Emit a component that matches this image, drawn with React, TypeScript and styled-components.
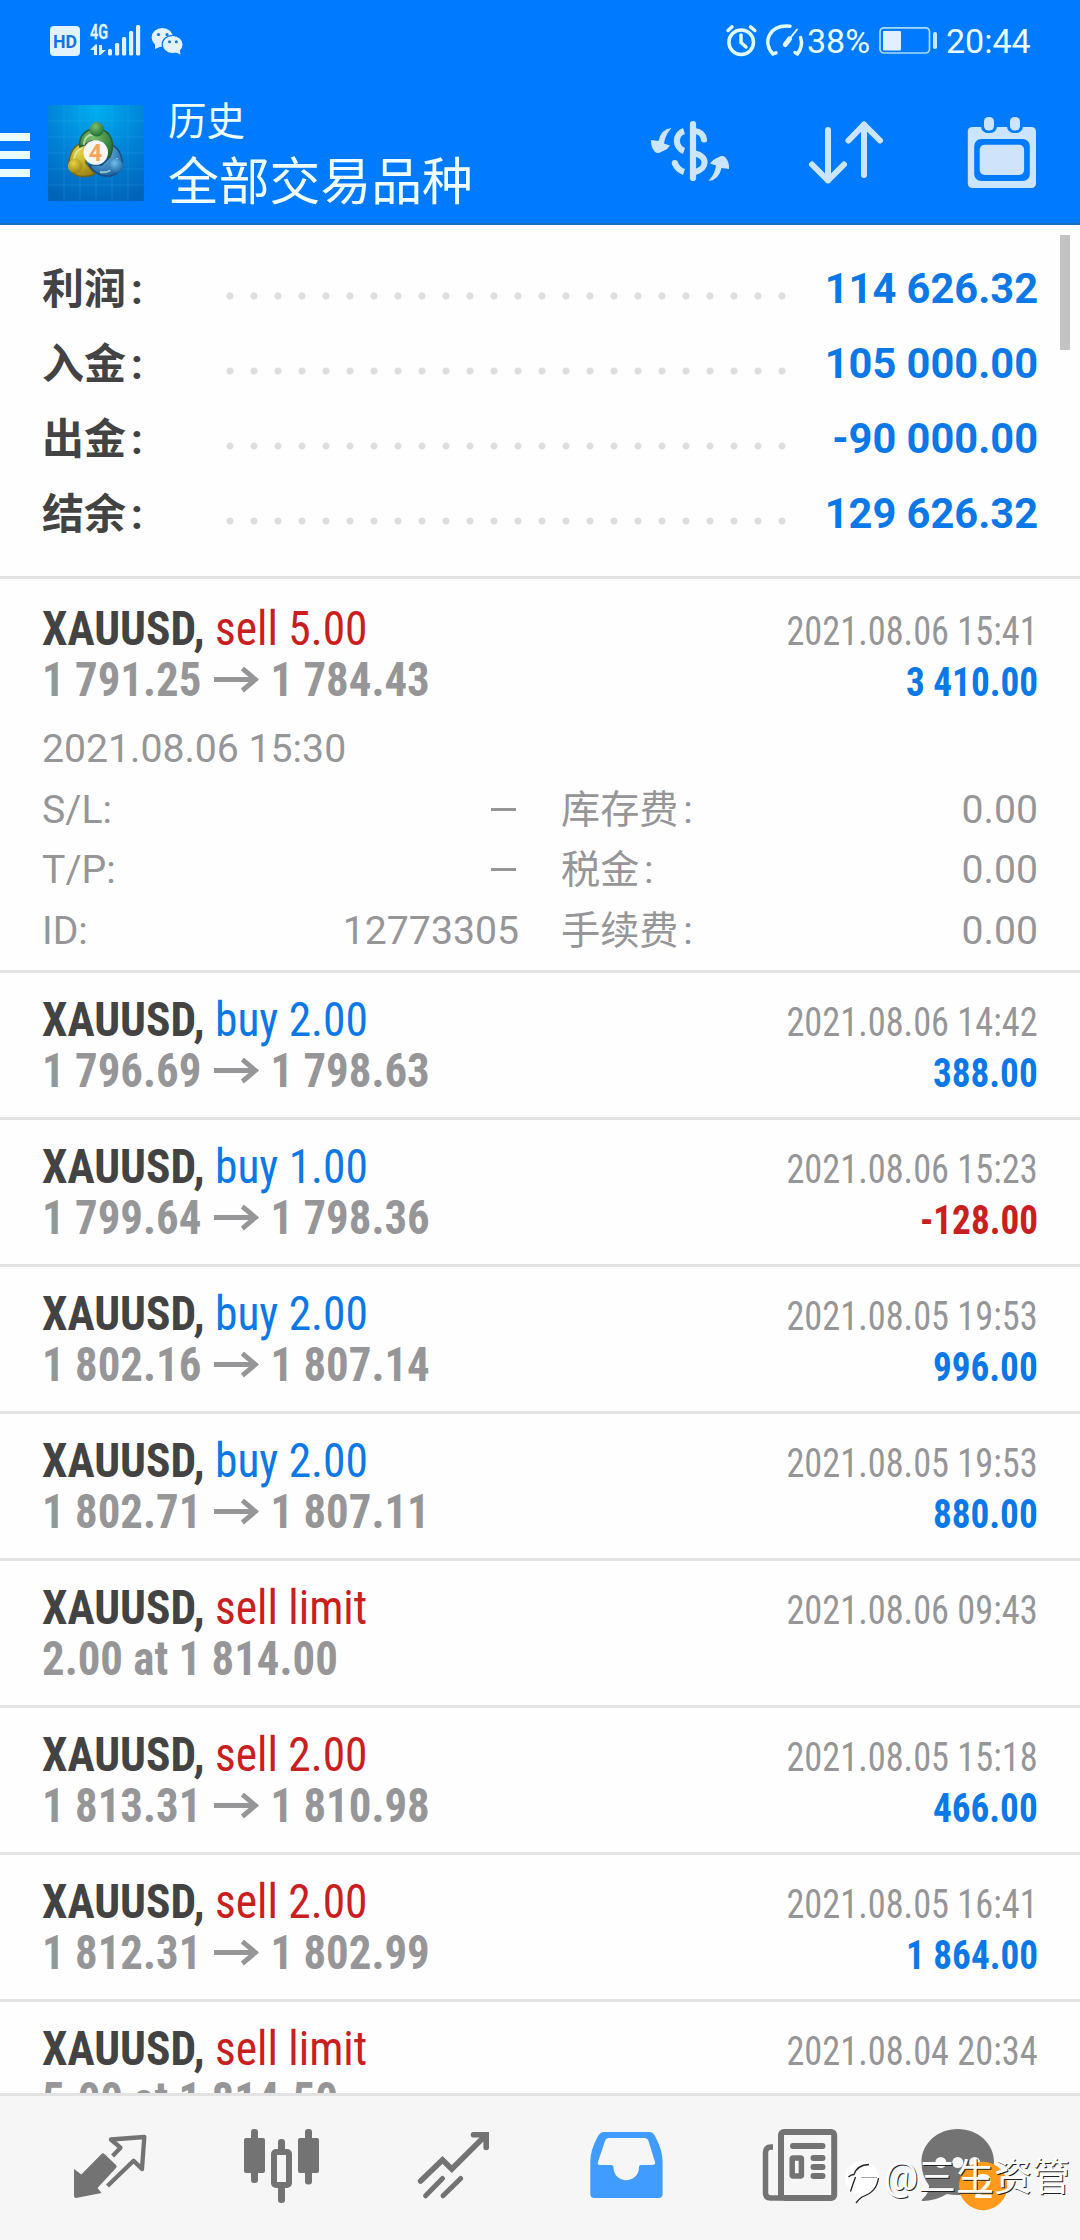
import React from 'react';
import styled, { createGlobalStyle } from 'styled-components';

const SANS = "Roboto, 'Noto Sans CJK SC', sans-serif";
const CONDENSED = "'Roboto Condensed', Roboto, 'Noto Sans CJK SC', sans-serif";
const BLUE = '#0b78e8';
const RED = '#c9201f';
const GREY = '#969698';
const PALE = '#cce5ff';
const TAB = '#737373';

const GlobalStyle = createGlobalStyle`
  body { margin: 0; background: #fff; }
  * { box-sizing: border-box; }
  svg { display: block; flex: none; }
`;

const Screen = styled.div`
  position: relative;
  display: flex;
  flex-direction: column;
  width: 1080px;
  height: 2240px;
  overflow: hidden;
  background: #fefefe;
  font-family: ${SANS};
`;

const Header = styled.header`
  flex: none;
  height: 225px;
  background: #007aff;
  border-bottom: 2px solid #1c6fc4;
  color: #fff;
`;

const StatusBar = styled.div`
  display: flex;
  justify-content: space-between;
  align-items: center;
  height: 80px;
  padding: 0 50px 0 50px;
`;

const StatusGroup = styled.div`
  display: flex;
  align-items: center;
`;

const StatusText = styled.span<{ $left: number; $width: number }>`
  margin-left: ${(p) => p.$left}px;
  width: ${(p) => p.$width}px;
  font-size: 34px;
  line-height: 40px;
  color: #eaffff;
  white-space: nowrap;
  padding-top: 2px;
`;

const Toolbar = styled.div`
  display: flex;
  height: 142px;
  padding-right: 33px;
`;

const MenuBars = styled.div`
  display: flex;
  flex-direction: column;
  gap: 10px;
  width: 30px;
  padding-top: 53px;
`;

const MenuBar = styled.div`
  height: 8px;
  background: #eafcff;
`;

const LogoBox = styled.div`
  margin: 25px 0 0 18px;
`;

const Titles = styled.div`
  display: flex;
  flex-direction: column;
  gap: 3px;
  margin-left: 24px;
  padding-top: 14px;
  color: #f0ffff;
`;

const Caption = styled.div`
  font-size: 38.5px;
  line-height: 56px;
`;

const Title = styled.div`
  font-size: 50.8px;
  line-height: 60px;
`;

const Actions = styled.div`
  display: flex;
  gap: 66px;
  margin-left: auto;
  padding-top: 25px;
`;

const Summary = styled.section`
  flex: none;
  height: 354px;
  padding: 26px 42px 0;
  border-bottom: 3px solid #e3e3e3;
`;

const SummaryRow = styled.div`
  display: flex;
  justify-content: space-between;
  height: 75px;
  line-height: 75px;
  font-size: 41.6px;
  font-weight: 700;
`;

const SummaryLabel = styled.span`
  width: 176px;
  padding-top: 1px;
  font-size: 42px;
  color: #434343;
`;

const Colon = styled.span`
  margin-left: 0.12em;
`;

const Leader = styled.span`
  width: 576px;
  height: 8px;
  margin-top: 41px;
  background: radial-gradient(circle at 12px 4px, #dedede 3px, transparent 4px) 0 0 / 24px 8px repeat-x;
`;

const SummaryValue = styled.span`
  width: 244px;
  text-align: right;
  color: ${BLUE};
`;

const List = styled.main`
  flex: 1;
  min-height: 0;
  overflow: hidden;
`;

const Deal = styled.article<{ $open: boolean }>`
  display: flex;
  flex-direction: column;
  gap: 11px;
  height: ${(p) => (p.$open ? 394 : 147)}px;
  padding: ${(p) => (p.$open ? 24 : 21)}px 42px 0 42px;
  border-bottom: 3px solid #e3e3e3;
`;

const DealHead = styled.div`
  display: flex;
  justify-content: space-between;
`;

const Column = styled.div<{ $end?: boolean }>`
  display: flex;
  flex-direction: column;
  padding-top: ${(p) => (p.$end ? 3 : 0)}px;
  align-items: ${(p) => (p.$end ? 'flex-end' : 'flex-start')};
`;

const Line = styled.div<{ $size: number; $bold?: boolean; $color: string; $squeeze: number; $end?: boolean }>`
  display: flex;
  align-items: center;
  height: 51px;
  line-height: 51px;
  font-family: ${CONDENSED};
  font-stretch: 75%;
  font-size: ${(p) => p.$size}px;
  font-weight: ${(p) => (p.$bold ? 700 : 400)};
  color: ${(p) => p.$color};
  white-space: pre;
  transform: scaleX(${(p) => p.$squeeze});
  transform-origin: ${(p) => (p.$end ? 'right' : 'left')} center;
`;

const Action = styled.span<{ $color: string }>`
  font-weight: 400;
  color: ${(p) => p.$color};
`;

const Details = styled.div`
  display: grid;
  grid-template-columns: 477px 477px;
  column-gap: 42px;
  grid-auto-rows: 60.6px;
  line-height: 60.6px;
  font-size: 39.2px;
  color: ${GREY};
`;

const OpenTime = styled.div`
  grid-column: 1 / -1;
`;

const Field = styled.div`
  display: flex;
  justify-content: space-between;
`;

const Dash = styled.i`
  width: 25px;
  height: 3px;
  margin: 28px 3px 0 0;
  background: ${GREY};
`;

const ScrollThumb = styled.div`
  position: absolute;
  left: 1060px;
  top: 235px;
  width: 10px;
  height: 115px;
  background: #c3c3c3;
`;

const TabBar = styled.nav`
  flex: none;
  display: flex;
  height: 147px;
  padding-left: 24px;
  border-top: 3px solid #e3e3e3;
  background: #f6f6f7;
`;

const Watermark = styled.div`
  position: absolute;
  left: 843px;
  top: 2150px;
  display: flex;
  height: 56px;
  line-height: 54px;
  font-size: 38px;
  color: #fff;
  text-shadow: 1px 1px 0 #222;
  white-space: nowrap;
`;

/* Status bar icons */

const LeftStatus = () => (
  <svg width="136" height="40" viewBox="50 20 136 40" fill="#e2f3ff">
    <rect x="50" y="26" width="30" height="30" rx="4" />
    <text x="65" y="48" fontSize="19" fontWeight="700" textAnchor="middle" fill="#1275e0" textLength="24" lengthAdjust="spacingAndGlyphs">HD</text>
    <text x="90" y="39" fontSize="19.500" fontWeight="600" stroke="#e2f3ff" strokeWidth="0.300" textLength="18" lengthAdjust="spacingAndGlyphs">4G</text>
    <path d="M90 50 L95.500 44.500 H97 V55 H94 V50Z M99 45 H102 V50 H106 L100.500 55 H99Z" />
    <rect x="108" y="49" width="4" height="6.500" rx="1.500" />
    <rect x="115" y="43" width="4.200" height="12.500" rx="1.500" />
    <rect x="122" y="37" width="4.200" height="18.500" rx="1.500" />
    <rect x="129" y="31" width="4.200" height="24.500" rx="1.500" />
    <rect x="136" y="25" width="4.200" height="30.500" rx="1.500" />
    <ellipse cx="162.300" cy="37.500" rx="10.700" ry="9.500" />
    <path d="M155 43 L155 49 L162 46Z" />
    <ellipse cx="172.700" cy="44.500" rx="10.500" ry="9.200" stroke="#007aff" strokeWidth="1.200" />
    <path d="M175 52 L180.500 54.500 L179.500 49Z" />
    <g fill="#1275e0">
      <circle cx="158.500" cy="34.500" r="1.600" />
      <circle cx="167" cy="34.500" r="1.600" />
      <circle cx="169.500" cy="41.800" r="1.500" />
      <circle cx="176.300" cy="41.800" r="1.500" />
    </g>
  </svg>
);

const AlarmAndGauge = () => (
  <svg width="82" height="40" viewBox="725 20 82 40" fill="none" stroke="#dffbff" strokeWidth="3.500" strokeLinecap="round">
    <circle cx="741.200" cy="42.300" r="12.300" />
    <path d="M741 35 V42.500 L746 47" />
    <path d="M728 30.500 L732 26.800 M750.500 26.800 L754.800 30.500" />
    <path d="M776 52.800 L773 54 C762 42 769 24.500 790 26.200" />
    <path d="M795 52.500 L797.500 54 C801.500 48.500 802.500 43 800.600 37.500" />
    <path d="M797 29.500 L785.500 44" strokeWidth="2" />
    <path d="M789.500 39 L785.300 44.500" strokeWidth="5" />
  </svg>
);

const Battery = () => (
  <svg width="60" height="40" viewBox="879 20 60 40">
    <rect x="880" y="27.800" width="49.500" height="25.200" rx="4" fill="none" stroke="#a5dcff" strokeWidth="1.700" />
    <rect x="883" y="31" width="18" height="19.500" rx="1" fill="#e0f0ff" />
    <rect x="933" y="32" width="4" height="17" rx="1.800" fill="#c5e8ff" />
  </svg>
);

/* Toolbar icons */

const Logo = () => (
  <svg width="96" height="96" viewBox="0 0 96 96">
    <defs>
      <radialGradient id="sky" cx="50%" cy="5%" r="100%">
        <stop offset="0" stopColor="#00aeee" />
        <stop offset="0.500" stopColor="#0083d8" />
        <stop offset="1" stopColor="#0064b8" />
      </radialGradient>
      <radialGradient id="green" cx="40%" cy="30%" r="75%">
        <stop offset="0" stopColor="#7cbf6c" />
        <stop offset="1" stopColor="#1c6a30" />
      </radialGradient>
      <radialGradient id="yellow" cx="40%" cy="30%" r="75%">
        <stop offset="0" stopColor="#e3d43f" />
        <stop offset="1" stopColor="#9a8012" />
      </radialGradient>
      <radialGradient id="blue" cx="40%" cy="30%" r="75%">
        <stop offset="0" stopColor="#74bdea" />
        <stop offset="1" stopColor="#155f9f" />
      </radialGradient>
    </defs>
    <rect width="96" height="96" fill="url(#sky)" />
    <path d="M0 16H96M0 32H96M0 48H96M0 64H96M0 80H96M16 0V96M32 0V96M48 0V96M64 0V96M80 0V96" stroke="#39b2ee" strokeOpacity="0.250" />
    <path d="M37 38 C24 38 19 54 22 64 C26 73 38 73 47 69 L38 58 L39 45Z" fill="url(#yellow)" stroke="#6d6420" strokeWidth="1.500" />
    <path d="M63 39 C73 44 76 56 73 64 C65 75 49 73 41 60 L54 60 L62 52Z" fill="url(#blue)" stroke="#1b4f80" strokeWidth="1.500" />
    <path d="M32 42 C30 31 39 22 51 24 C63 26 68 38 62 52 L54 54 L44 36Z" fill="url(#green)" stroke="#255c37" strokeWidth="1.500" />
    <path d="M36 40 C36 33 40 29 46 30 M26 54 C27 47 30 44 35 43 M52 67 C62 69 68 62 69 53" stroke="#e6f8d8" strokeOpacity="0.600" strokeWidth="2" fill="none" />
    <circle cx="48.700" cy="24.300" r="7.200" fill="url(#green)" />
    <circle cx="27" cy="61" r="7.200" fill="url(#yellow)" />
    <circle cx="68" cy="61" r="7.200" fill="url(#blue)" />
    <circle cx="47.700" cy="47.500" r="12.300" fill="#f8f6f4" />
    <text x="47.500" y="55.700" fontSize="23.500" fontWeight="700" fill="#f5a55a" textAnchor="middle">4</text>
  </svg>
);

const CurrencyIcon = () => {
  const arrow = 'M671.500 128 Q661 129 658.500 141 L651 140 Q650.500 147 655 152 Q658 154 661 152 Q667 150 670 145.500 L664 143.500 Q665 135 671.500 128Z';
  return (
    <svg width="90" height="96" viewBox="645 105 90 96" fill="none" stroke={PALE} strokeWidth="6.200">
      <path d="M693 124 V178" strokeLinecap="round" />
      <path d="M695 131 C700 131.500 703.500 135 704 139.500" strokeLinecap="round" />
      <path d="M695 153.500 C707.500 156 708 168.500 695 172" />
      <path d="M684 131 C674.500 134 674.500 147.500 684 151" />
      <path d="M684 172 C679.500 170.500 676.500 167.500 674.800 163" />
      <path d="M674.800 163 h0.010" strokeLinecap="round" />
      <g fill={PALE} stroke="none">
        <path d={arrow} />
        <path d={arrow} transform="rotate(180 690 154.500)" />
      </g>
    </svg>
  );
};

const SortIcon = () => (
  <svg width="90" height="96" viewBox="801 105 90 96" fill="none" stroke={PALE} strokeWidth="6" strokeLinecap="round" strokeLinejoin="round">
    <path d="M828 130 V180.500 M812 164.500 L828 180.500 L844 164.500" />
    <path d="M864 175 V124.500 M848.500 140.500 L864 124.500 L880 140.500" />
  </svg>
);

const CalendarIcon = () => (
  <svg width="90" height="96" viewBox="957 105 90 96">
    <rect x="967.800" y="127" width="68.200" height="61" rx="4.500" fill={PALE} />
    <rect x="974.200" y="139" width="55.600" height="42" rx="7" fill="#007aff" />
    <rect x="979.700" y="144.800" width="44.400" height="30.200" rx="5" fill="#cfe3fa" />
    <rect x="981" y="114" width="16" height="19" rx="6.500" fill="#007aff" />
    <rect x="1007" y="114" width="16" height="19" rx="6.500" fill="#007aff" />
    <rect x="984" y="117" width="10" height="13.500" rx="4.500" fill={PALE} />
    <rect x="1010" y="117" width="10" height="13.500" rx="4.500" fill={PALE} />
  </svg>
);

const PriceArrow = styled.svg.attrs({ viewBox: '0 0 48 26', width: 48, height: 26 })`
  margin: 0 13px 0 13px;
  fill: none;
  stroke: ${GREY};
  stroke-width: 5;
`;

/* Tab icons, each drawn on a full 172x144 tab cell */

const TabIcon = styled.svg.attrs({ viewBox: '0 0 172 144', width: 172, height: 144 })`
  fill: ${TAB};
  overflow: visible;
`;

const stroked = { fill: 'none', stroke: TAB } as const;

const QuotesTab = () => (
  <TabIcon>
    <path d="M50 73 L57.300 78.500 L77.500 58 Q79 56.500 80.500 58 L92 69 Q93.500 70.700 92 72 L73.500 92 L77.500 97 L52 102 Q50 102 50 100Z" />
    <path d="M88.600 60 L96.500 51.700 L86.900 43.500 L120.300 41 L118 73 L109.600 64.700 L83.500 90" {...stroked} strokeWidth="4.300" strokeLinejoin="round" />
  </TabIcon>
);

const ChartTab = () => (
  <TabIcon>
    <rect x="55" y="33" width="7" height="54" rx="3" />
    <rect x="48" y="42" width="21" height="35" rx="2" />
    <rect x="82" y="43" width="7" height="14" rx="3" />
    <rect x="82" y="90" width="7" height="17" rx="3" />
    <rect x="78" y="56" width="15" height="33" rx="2" {...stroked} strokeWidth="6" />
    <rect x="109" y="33" width="7" height="55.500" rx="3" />
    <rect x="102" y="42" width="21" height="35" rx="2" />
  </TabIcon>
);

const TradeTab = () => (
  <TabIcon>
    <path d="M52.600 85 L74.500 64 L83.800 73 L118 39 M105.500 38.800 H118.200 V51.500" {...stroked} strokeWidth="5.600" strokeLinecap="round" />
    <path d="M74.500 82.500 L57.600 99.800 M92.700 82.500 L75 99.800" {...stroked} strokeWidth="5" strokeLinecap="round" />
  </TabIcon>
);

const HistoryTab = () => (
  <TabIcon>
    <path fill="#409cff" fillRule="evenodd" d="M64 36 H109 Q113 36 115 40 Q122.600 54 122.600 66 V98 Q122.600 102 118.500 102 H54.500 Q50.300 102 50.300 98 V66 Q50.300 54 57.500 41 Q60 36 64 36Z M69 42 Q66 42 65 45 L58 66 Q57 69 60 69 H71 Q73.400 69 73.400 71 C73.400 88.500 99 88.500 99 71 Q99 69 101 69 H112 Q116 69 115 66 L108.500 45 Q107.500 42 104 42Z" />
  </TabIcon>
);

const NewsTab = () => (
  <TabIcon>
    <rect x="69" y="36" width="53.200" height="66" rx="3" {...stroked} strokeWidth="6" />
    <path d="M61 51 H59 Q53.500 51 53.500 57 V97 Q53.500 102 58.500 102 H70" {...stroked} strokeWidth="5.500" />
    <path d="M81 50 H110.500 M101.500 62 H110.500 M101.500 71 H110.500 M101.500 80 H110.500" {...stroked} strokeWidth="6" strokeLinecap="round" />
    <rect x="80.200" y="62" width="9.200" height="18" rx="1" {...stroked} strokeWidth="5.500" />
  </TabIcon>
);

const ChatTab = () => (
  <TabIcon>
    <path d="M73.700 33 C94 33 110 47.500 110 66 C110 85 94 99 73.700 99 Q68 99 63 98 Q51 105 39 105 Q36.500 105 38.500 103 Q46 96 45 89.500 Q37.500 80 37.500 66 C37.500 47.500 53.500 33 73.700 33Z" />
    <g fill="#f6f6f7">
      <circle cx="56.800" cy="66.500" r="5.500" />
      <circle cx="73.700" cy="66.500" r="5.500" />
      <circle cx="90.600" cy="66.500" r="5.500" />
    </g>
    <circle cx="99.200" cy="90" r="24.200" fill="#ff9a1a" />
    <text x="99.200" y="102" fontSize="34" fontWeight="500" fill="#fff" textAnchor="middle">2</text>
  </TabIcon>
);

const WatermarkLogo = () => (
  <svg width="41" height="56" viewBox="843 2150 41 56" fill="none">
    <circle cx="862" cy="2178" r="17" fill="#fff" />
    <path d="M879 2178 C879 2190 868 2196 857 2200 L864 2190Z" fill="#fff" />
    <g stroke="#222" strokeWidth="1.300">
      <path d="M848.500 2177 Q851 2174.500 854 2174.500 Q857 2165 869 2164.500" />
      <path d="M855.500 2177 Q853 2184 850.500 2191.500" />
      <path d="M878.500 2178 C877 2191 868 2195 862 2197 Q859 2199 856 2203" />
    </g>
    <path d="M861 2177.500 H877" stroke="#aaa" />
  </svg>
);

interface DealData {
  side: 'buy' | 'sell';
  action: string;
  from: string;
  to?: string;
  time: string;
  profit?: string;
  open?: boolean;
}

const totals = [
  ['利润', '114 626.32'],
  ['入金', '105 000.00'],
  ['出金', '-90 000.00'],
  ['结余', '129 626.32'],
];

const deals: DealData[] = [
  { side: 'sell', action: 'sell 5.00', from: '1 791.25', to: '1 784.43', time: '2021.08.06 15:41', profit: '3 410.00', open: true },
  { side: 'buy', action: 'buy 2.00', from: '1 796.69', to: '1 798.63', time: '2021.08.06 14:42', profit: '388.00' },
  { side: 'buy', action: 'buy 1.00', from: '1 799.64', to: '1 798.36', time: '2021.08.06 15:23', profit: '-128.00' },
  { side: 'buy', action: 'buy 2.00', from: '1 802.16', to: '1 807.14', time: '2021.08.05 19:53', profit: '996.00' },
  { side: 'buy', action: 'buy 2.00', from: '1 802.71', to: '1 807.11', time: '2021.08.05 19:53', profit: '880.00' },
  { side: 'sell', action: 'sell limit', from: '2.00 at 1 814.00', time: '2021.08.06 09:43' },
  { side: 'sell', action: 'sell 2.00', from: '1 813.31', to: '1 810.98', time: '2021.08.05 15:18', profit: '466.00' },
  { side: 'sell', action: 'sell 2.00', from: '1 812.31', to: '1 802.99', time: '2021.08.05 16:41', profit: '1 864.00' },
  { side: 'sell', action: 'sell limit', from: '5.00 at 1 814.50', time: '2021.08.04 20:34' },
];

const Fee = ({ label }: { label: string }) => (
  <Field>
    <span>{label}<Colon>:</Colon></span>
    <span>0.00</span>
  </Field>
);

const DealRow = ({ deal }: { deal: DealData }) => (
  <Deal $open={!!deal.open}>
    <DealHead>
      <Column>
        <Line $size={48} $bold $squeeze={0.946} $color="#434343">
          XAUUSD, <Action $color={deal.side === 'buy' ? BLUE : RED}>{deal.action}</Action>
        </Line>
        <Line $size={48} $bold $squeeze={0.934} $color={GREY}>
          {deal.from}
          {deal.to && (
            <PriceArrow>
              <path d="M0 12.500 H45 M30.500 1.500 L44.500 12.500 L30.500 23.500" />
            </PriceArrow>
          )}
          {deal.to}
        </Line>
      </Column>
      <Column $end>
        <Line $size={40} $end $squeeze={0.908} $color={GREY}>{deal.time}</Line>
        {deal.profit && (
          <Line $size={40} $bold $end $squeeze={0.93} $color={deal.profit.startsWith('-') ? RED : BLUE}>{deal.profit}</Line>
        )}
      </Column>
    </DealHead>
    {deal.open && (
      <Details>
        <OpenTime>2021.08.06 15:30</OpenTime>
        <Field>S/L:<Dash /></Field>
        <Fee label="库存费" />
        <Field>T/P:<Dash /></Field>
        <Fee label="税金" />
        <Field>ID:<span>12773305</span></Field>
        <Fee label="手续费" />
      </Details>
    )}
  </Deal>
);

export default function App() {
  return (
    <Screen>
      <GlobalStyle />
      <Header>
        <StatusBar>
          <LeftStatus />
          <StatusGroup>
            <AlarmAndGauge />
            <StatusText $left={0} $width={72}>38%</StatusText>
            <Battery />
            <StatusText $left={7} $width={84}>20:44</StatusText>
          </StatusGroup>
        </StatusBar>
        <Toolbar>
          <MenuBars>
            <MenuBar />
            <MenuBar />
            <MenuBar />
          </MenuBars>
          <LogoBox><Logo /></LogoBox>
          <Titles>
            <Caption>历史</Caption>
            <Title>全部交易品种</Title>
          </Titles>
          <Actions>
            <CurrencyIcon />
            <SortIcon />
            <CalendarIcon />
          </Actions>
        </Toolbar>
      </Header>
      <Summary>
        {totals.map(([label, value]) => (
          <SummaryRow key={label}>
            <SummaryLabel>{label}<Colon>:</Colon></SummaryLabel>
            <Leader />
            <SummaryValue>{value}</SummaryValue>
          </SummaryRow>
        ))}
      </Summary>
      <List>
        {deals.map((deal, i) => <DealRow key={i} deal={deal} />)}
      </List>
      <TabBar>
        <QuotesTab />
        <ChartTab />
        <TradeTab />
        <HistoryTab />
        <NewsTab />
        <ChatTab />
      </TabBar>
      <ScrollThumb />
      <Watermark>
        <WatermarkLogo />
        @三生资管
      </Watermark>
    </Screen>
  );
}
